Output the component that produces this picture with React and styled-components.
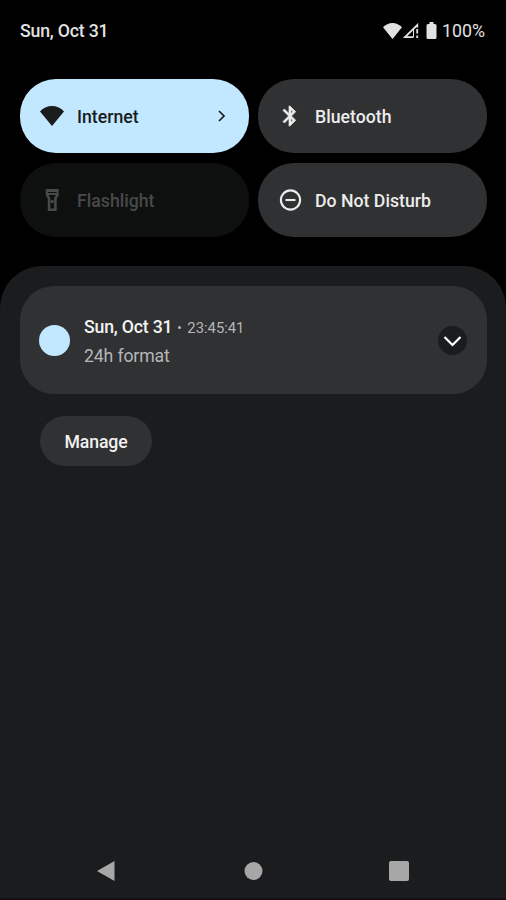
import React from 'react';
import styled, { createGlobalStyle } from 'styled-components';

const GlobalStyle = createGlobalStyle`
  * {
    box-sizing: border-box;
  }
  body {
    margin: 0;
    background: #000;
    font-family: Roboto, sans-serif;
  }
`;
const Screen = styled.div`
  display: flex;
  flex-direction: column;
  width: 506px;
  height: 900px;
  background: #000;
  overflow: hidden;
`;
const StatusBar = styled.header`
  display: flex;
  align-items: center;
  justify-content: space-between;
  height: 79px;
  padding: 0 21px 18px 20px;
  color: #e2e2e2;
`;
const StatusIcons = styled.div`
  display: flex;
  align-items: center;
`;
const Battery = styled.span`
  display: flex;
  margin: 0 5px 0 7px;
`;
const Label = styled.span`
  font-size: ${({ $size }) => $size || 17.7}px;
  font-weight: ${({ $weight }) => $weight || 500};
  letter-spacing: ${({ $spacing }) => $spacing || 0}px;
  line-height: 22px;
  white-space: nowrap;
`;
const Tiles = styled.div`
  display: grid;
  grid-template-columns: 229px 229px;
  grid-auto-rows: 74px;
  gap: 10px 9px;
  padding: 0 0 29px 20px;
`;
const tileColors = {
  on: ['#c2e8ff', '#1a1c1e'],
  off: ['#303132', '#ececec'],
  disabled: ['#0e1010', '#484949'],
};
const Tile = styled.button`
  display: flex;
  align-items: center;
  border: 0;
  border-radius: 36px;
  padding: 0 20px;
  font-family: inherit;
  background: ${({ $state }) => tileColors[$state][0]};
  color: ${({ $state }) => tileColors[$state][1]};
`;
const TileLabel = styled(Label)`
  padding-top: 2px;
`;
const TileIcon = styled.span`
  display: flex;
  width: 37px;
`;
const Arrow = styled.span`
  display: flex;
  margin-left: auto;
`;
const Shade = styled.main`
  display: flex;
  flex-direction: column;
  flex: 1;
  align-items: flex-start;
  padding: 20px 19px 0 20px;
  border-radius: 42px 42px 0 0;
  background: #1b1c1e;
`;
const Notification = styled.section`
  display: flex;
  align-items: center;
  width: 467px;
  height: 108px;
  padding: 0 20px 0 19px;
  border-radius: 34px;
  background: #303132;
`;
const Avatar = styled.div`
  width: 31px;
  height: 31px;
  margin-right: 14px;
  border-radius: 50%;
  background: #c2e8ff;
`;
const Body = styled.div`
  display: flex;
  flex: 1;
  flex-direction: column;
  gap: 6px;
  padding-top: 3px;
  color: #b4b7b9;
`;
const Title = styled.div`
  display: flex;
  align-items: baseline;
`;
const Strong = styled(Label)`
  color: #f3f3f3;
`;
const Dot = styled.span`
  align-self: center;
  width: 3px;
  height: 3px;
  margin: 0 6px;
  border-radius: 50%;
  background: #b4b7b9;
`;
const Expand = styled.button`
  display: flex;
  align-items: center;
  justify-content: center;
  width: 29px;
  height: 29px;
  padding: 2px 0 0;
  border: 0;
  border-radius: 50%;
  background: #1b1c1e;
`;
const Manage = styled.button`
  width: 112px;
  height: 50px;
  margin: 22px 0 0 20px;
  padding: 1px 0 0;
  border: 0;
  border-radius: 25px;
  background: #303132;
  color: #f0f0f0;
  font-family: inherit;
`;
const NavBar = styled.nav`
  display: flex;
  align-items: center;
  justify-content: space-between;
  height: 56px;
  padding: 2px 97px 0 96px;
  background: #1b1c1e;
`;
const BottomEdge = styled.div`
  height: 2px;
  background: #160d18;
`;

const WifiIcon = ({ width, height }) => (
  <svg width={width} height={height} viewBox="0 0 24 20" fill="currentColor">
    <path d="M12 20 0 5.400C3.200 2 7.300 0 12 0s8.800 2 12 5.400z" />
  </svg>
);
const SignalIcon = () => (
  <svg width="17" height="16" viewBox="0 0 17 16" fill="none" stroke="currentColor">
    <path d="M11.500 14.200H3L15.300 2V4.500" strokeWidth="1.800" />
    <path d="M11.500 6V14" strokeWidth="1" />
    <path d="M15.200 6V10.500M15.200 12.500V15" strokeWidth="1.800" />
  </svg>
);
const BatteryIcon = () => (
  <svg width="11" height="17" viewBox="0 0 11 17" fill="currentColor">
    <path d="M3.500 0h4v2H9q1.500 0 1.500 1.500v12Q10.500 17 9 17H2Q.5 17 .5 15.500v-12Q.5 2 2 2h1.500z" />
  </svg>
);
const BluetoothIcon = () => (
  <svg width="24" height="24" viewBox="0 0 24 24" fill="currentColor" stroke="currentColor" strokeWidth=".7">
    <path d="M17.710 7.710 12 2h-1v7.590L6.410 5 5 6.410 10.590 12 5 17.590 6.410 19 11 14.410V22h1l5.710-5.710-4.300-4.290zM13 5.830l1.880 1.880L13 9.590zm1.880 10.460L13 18.170v-3.760z" />
  </svg>
);
const FlashlightIcon = () => (
  <svg width="24" height="24" viewBox="0 0 24 24">
    <path fill="currentColor" fillRule="evenodd" d="M5.800 1h12.900v6.500l-2 3V23H7.800V10.500l-2-3zM8 4v1h8.500V4zM8.500 7l1.900 3v10.500h3.700V10L16 7z" />
    <circle cx="12.250" cy="13.500" r="1.700" fill="currentColor" />
  </svg>
);
const DndIcon = () => (
  <svg width="24" height="24" viewBox="0 0 24 24" fill="none" stroke="currentColor" strokeWidth="2.100">
    <circle cx="12.500" cy="12" r="9.600" />
    <path d="M7.500 12h10" />
  </svg>
);

const App = () => (
  <Screen>
    <GlobalStyle />
    <StatusBar>
      <Label $spacing={-0.2}>Sun, Oct 31</Label>
      <StatusIcons>
        <WifiIcon width={19} height={16} />
        <SignalIcon />
        <Battery><BatteryIcon /></Battery>
        <Label $size={17.8} $weight={400}>100%</Label>
      </StatusIcons>
    </StatusBar>
    <Tiles>
      <Tile $state="on">
        <TileIcon><WifiIcon width={24} height={20} /></TileIcon>
        <TileLabel>Internet</TileLabel>
        <Arrow>
          <svg width="14" height="14" viewBox="0 0 14 14" fill="none" stroke="currentColor" strokeWidth="1.700">
            <path d="m4 2 5 5-5 5" />
          </svg>
        </Arrow>
      </Tile>
      <Tile $state="off">
        <TileIcon><BluetoothIcon /></TileIcon>
        <TileLabel>Bluetooth</TileLabel>
      </Tile>
      <Tile $state="disabled">
        <TileIcon><FlashlightIcon /></TileIcon>
        <TileLabel>Flashlight</TileLabel>
      </Tile>
      <Tile $state="off">
        <TileIcon><DndIcon /></TileIcon>
        <TileLabel>Do Not Disturb</TileLabel>
      </Tile>
    </Tiles>
    <Shade>
      <Notification>
        <Avatar />
        <Body>
          <Title>
            <Strong $spacing={-0.2}>Sun, Oct 31</Strong>
            <Dot />
            <Label $size={14.8} $weight={400}>23:45:41</Label>
          </Title>
          <Label $spacing={-0.15} $weight={400}>24h format</Label>
        </Body>
        <Expand>
          <svg width="19" height="13" viewBox="0 0 19 13" fill="none" stroke="#fff" strokeWidth="2.200">
            <path d="m1.500 2 8 8 8-8" />
          </svg>
        </Expand>
      </Notification>
      <Manage>
        <Label $spacing={-0.15}>Manage</Label>
      </Manage>
    </Shade>
    <NavBar>
      <svg width="20" height="22" viewBox="0 0 20 22">
        <path d="M18.500 1v20L1 11z" fill="#a7a7a8" />
      </svg>
      <svg width="20" height="20" viewBox="0 0 20 20">
        <circle cx="10.500" cy="10" r="9" fill="#a7a7a8" />
      </svg>
      <svg width="20" height="20" viewBox="0 0 20 20">
        <rect width="20" height="20" rx="2" fill="#a7a7a8" />
      </svg>
    </NavBar>
    <BottomEdge />
  </Screen>
);

export default App;
